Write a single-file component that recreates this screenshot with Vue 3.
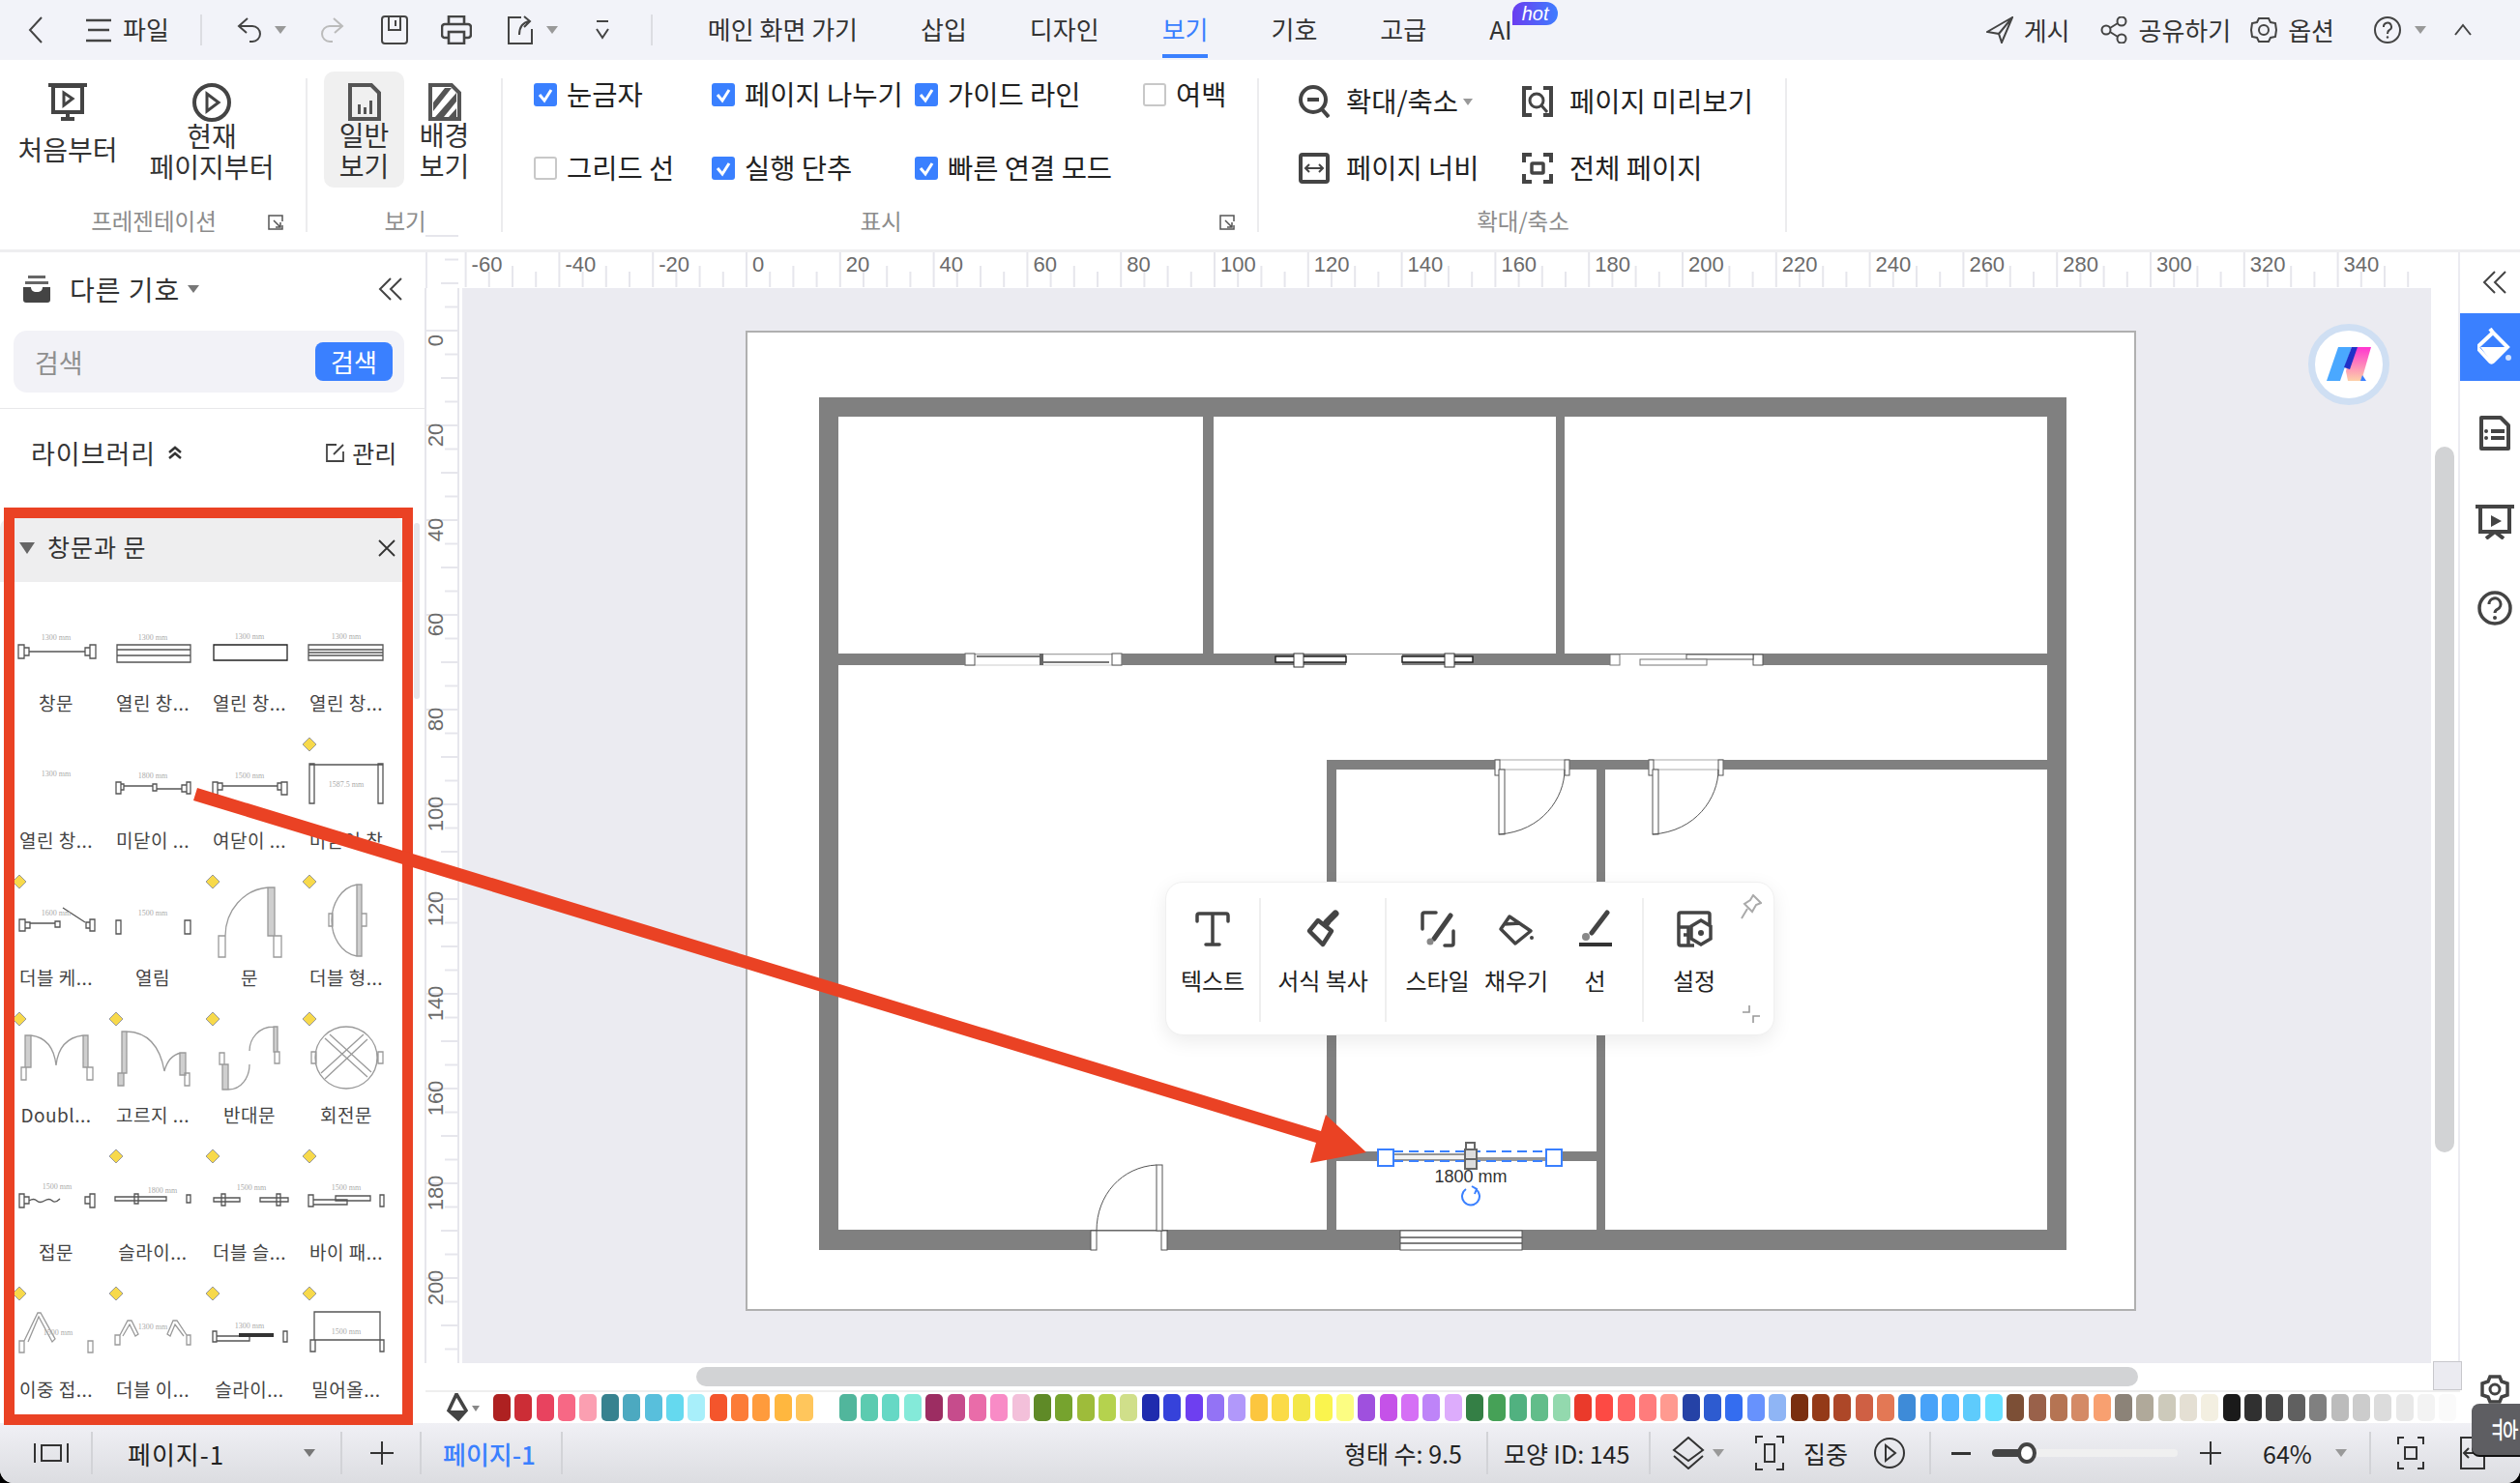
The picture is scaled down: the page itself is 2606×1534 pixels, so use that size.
<template>
  <div class="app">
    <header class="topbar">
      <button class="tb back"><svg width="20" height="30" viewBox="0 0 20 30"><path d="M15 2 3 15l12 13" class="ln"/></svg></button>
      <button class="tb file">
        <svg width="26" height="26" viewBox="0 0 26 26"><path d="M0 3h26M2 13h22M0 24h26" class="ln2"/></svg>
        <span>파일</span>
      </button>
      <i class="vsep first"></i>
      <button class="tb undo"><svg width="28" height="26" viewBox="0 0 28 26"><path d="M11 1 2 9l8 7M2 9h14a8 8 0 0 1 0 16h-3" class="ln"/></svg><b class="caret"></b></button>
      <button class="tb redo"><svg width="24" height="26" viewBox="0 0 24 26"><path d="M13 1l9 8-8 7M22 9H9a8 8 0 0 0 0 16h3" class="ln light"/></svg></button>
      <button class="tb save"><svg width="28" height="30" viewBox="0 0 28 30"><rect x="1" y="1" width="26" height="28" rx="3" class="ln"/><path d="M8 1v14h12V1M15 5v6" class="ln"/></svg></button>
      <button class="tb print"><svg width="32" height="30" viewBox="0 0 32 30"><path d="M8 9V1h16v8M8 23H4a3 3 0 0 1-3-3v-8a3 3 0 0 1 3-3h24a3 3 0 0 1 3 3v8a3 3 0 0 1-3 3h-4" class="ln2"/><rect x="8" y="17" width="16" height="12" class="ln2"/></svg></button>
      <button class="tb share"><svg width="28" height="30" viewBox="0 0 28 30"><path d="M15 2H2v27h24V14M13 20c0-9 4-13 11-14M18 1l6 5-6 6" class="ln"/></svg><b class="caret"></b></button>
      <button class="tb more"><svg width="16" height="22" viewBox="0 0 16 22"><path d="M2 2h12M2 10l6 9 6-9" class="ln"/></svg></button>
      <i class="vsep second"></i>
      <nav class="tabs">
        <span v-for="t in tabs" :key="t" class="tab" :class="{ on: t === '보기' }">{{ t }}</span>
        <span class="tab ai">AI<em class="hot">hot</em></span>
      </nav>
      <div class="top-right">
        <span class="tr publish"><svg width="28" height="28" viewBox="0 0 28 28"><path d="M27 1 1 16l12 2 3 9zM13 18 27 1" class="ln"/></svg>게시</span>
        <span class="tr sharing"><svg width="28" height="28" viewBox="0 0 28 28"><circle cx="6" cy="14" r="4.5" class="ln"/><circle cx="22" cy="5" r="4.5" class="ln"/><circle cx="22" cy="23" r="4.5" class="ln"/><path d="M10 12l8-5M10 16l8 5" class="ln"/></svg>공유하기</span>
        <span class="tr options"><svg width="28" height="28" viewBox="0 0 28 28"><path d="M9 2h10l2 4 5 1 1 7-1 7-5 1-2 4H9l-2-4-5-1-1-7 1-7 5-1z" class="ln"/><circle cx="14" cy="14" r="5" class="ln"/></svg>옵션</span>
        <span class="tr help"><svg width="28" height="28" viewBox="0 0 28 28"><circle cx="14" cy="14" r="13" class="ln"/><path d="M10 11a4 4 0 1 1 6 3c-2 1-2 2-2 4" class="ln"/><circle cx="14" cy="21.500" r="1.200" fill="#444"/></svg><b class="caret"></b></span>
        <svg class="fold" width="20" height="14" viewBox="0 0 20 14"><path d="M2 12l8-10 8 10" class="ln"/></svg>
      </div>
    </header>

    <section class="ribbon">
      <div class="rgroup g1">
        <div class="rbody">
          <button class="big first-btn">
            <svg width="40" height="39" viewBox="0 0 40 39"><path d="M0 2h40" stroke="#444" stroke-width="4"/><rect x="5" y="3" width="30" height="27" fill="none" stroke="#444" stroke-width="4"/><path d="M16 10l9 6-9 7z" fill="none" stroke="#444" stroke-width="3"/><path d="M20 30v6M13 37h14" stroke="#444" stroke-width="4"/></svg>
            <span class="single">처음부터</span>
          </button>
          <button class="big cur-btn">
            <svg width="40" height="40" viewBox="0 0 40 40"><circle cx="20" cy="20" r="18" fill="none" stroke="#444" stroke-width="4"/><path d="M15 11l12 9-12 9z" fill="none" stroke="#444" stroke-width="3"/></svg>
            <span>현재<br />페이지부터</span>
          </button>
        </div>
        <div class="rlabel">프레젠테이션</div>
        <svg class="launch" width="16" height="16" viewBox="0 0 16 16"><path d="M5 1H1v14h14v-4M1 1h14v6M6 6l7 7M13 8v5H8" fill="none" stroke="#555" stroke-width="1.500"/></svg>
      </div>

      <div class="rgroup g2">
        <div class="rbody">
          <button class="big view active">
            <svg width="34" height="39" viewBox="0 0 34 39"><path d="M2 2h22l8 8v27H2z" fill="none" stroke="#555" stroke-width="4"/><path d="M10 22h3v10h-3zM16 25h3v7h-3zM22 18h3v14h-3z" fill="#555"/></svg>
            <span>일반<br />보기</span>
          </button>
          <button class="big view">
            <svg width="34" height="39" viewBox="0 0 34 39"><path d="M2 2h22l8 8v27H2z" fill="none" stroke="#555" stroke-width="4"/><path d="M5 20 17 5h7L5 29zM7 35 29 10v9L16 35zM21 35l8-9v9z" fill="#555"/></svg>
            <span>배경<br />보기</span>
          </button>
        </div>
        <div class="rlabel">보기</div>
      </div>

      <div class="rgroup g3">
        <div class="rbody checks">
          <label v-for="c in checks" :key="c.t" class="chk">
            <svg v-if="c.on" width="24" height="24" viewBox="0 0 24 24"><rect width="24" height="24" rx="3" fill="#3a80ff"/><path d="M6 12l5 6 7-11" fill="none" stroke="#fff" stroke-width="3"/></svg>
            <svg v-else width="24" height="24" viewBox="0 0 24 24"><rect x="1" y="1" width="22" height="22" rx="2" fill="#fff" stroke="#c8c8c8" stroke-width="2"/></svg>
            <span>{{ c.t }}</span>
          </label>
        </div>
        <div class="rlabel">표시</div>
        <svg class="launch" width="16" height="16" viewBox="0 0 16 16"><path d="M5 1H1v14h14v-4M1 1h14v6M6 6l7 7M13 8v5H8" fill="none" stroke="#555" stroke-width="1.500"/></svg>
      </div>

      <div class="rgroup g4">
        <div class="rbody zooms">
          <span class="zm">
            <svg width="32" height="34" viewBox="0 0 32 34"><circle cx="15" cy="15" r="13" fill="none" stroke="#444" stroke-width="4"/><path d="M24 25l7 8" stroke="#444" stroke-width="4"/><path d="M9 15h12" stroke="#444" stroke-width="4"/></svg>
            <span>확대/축소</span><b class="caret tiny"></b>
          </span>
          <span class="zm">
            <svg width="32" height="32" viewBox="0 0 32 32"><path d="M10 2H2v28h8M22 2h8v28h-8" fill="none" stroke="#444" stroke-width="4"/><circle cx="15" cy="15" r="7" fill="none" stroke="#444" stroke-width="3"/><path d="M20 20l6 7" stroke="#444" stroke-width="3"/></svg>
            <span>페이지 미리보기</span>
          </span>
          <span class="zm">
            <svg width="32" height="32" viewBox="0 0 32 32"><rect x="2" y="2" width="28" height="28" rx="2" fill="none" stroke="#444" stroke-width="4"/><path d="M7 16h18M11 12l-4 4 4 4M21 12l4 4-4 4" fill="none" stroke="#444" stroke-width="2"/></svg>
            <span>페이지 너비</span>
          </span>
          <span class="zm">
            <svg width="32" height="32" viewBox="0 0 32 32"><path d="M10 2H2v8M22 2h8v8M10 30H2v-8M22 30h8v-8" fill="none" stroke="#444" stroke-width="4"/><rect x="10" y="11" width="12" height="10" rx="1" fill="none" stroke="#444" stroke-width="3.500"/></svg>
            <span>전체 페이지</span>
          </span>
        </div>
        <div class="rlabel">확대/축소</div>
      </div>
    </section>

    <main class="work">
      <aside class="left">
        <div class="lhead">
          <svg width="28" height="28" viewBox="0 0 28 28"><path d="M5 0h18v3H5zM2 6h24v3H2z" fill="#666"/><path d="M0 12h8c0 3 2 5 6 5s6-2 6-5h8v13a3 3 0 0 1-3 3H3a3 3 0 0 1-3-3z" fill="#444"/></svg>
          <span class="ltitle">다른 기호</span><b class="caret tri"></b>
          <svg class="collapse" width="26" height="24" viewBox="0 0 26 24"><path d="M13 1 2 12l11 11M24 1 13 12l11 11" class="ln"/></svg>
        </div>
        <div class="search">
          <span class="ph">검색</span>
          <button class="go">검색</button>
        </div>
        <div class="libhead">
          <span class="libtitle">라이브러리</span>
          <svg width="16" height="16" viewBox="0 0 16 16"><path d="M2 8l6-5 6 5M2 14l6-5 6 5" fill="none" stroke="#333" stroke-width="2.500"/></svg>
          <span class="manage">
            <svg width="20" height="20" viewBox="0 0 20 20"><path d="M11 2H1v17h17V9M8 12 18 2" fill="none" stroke="#444" stroke-width="1.800"/></svg>관리
          </span>
        </div>
        <section class="lib">
          <div class="libbar">
            <i class="down"></i>
            <span>창문과 문</span>
            <svg width="18" height="18" viewBox="0 0 18 18"><path d="M1 1l16 16M17 1 1 17" stroke="#333" stroke-width="1.800"/></svg>
          </div>
          <div class="shapes">
            <div v-for="s in shapes" :key="s.id" class="shape">
              <svg width="100" height="96" viewBox="0 0 100 96">
                <path v-if="s.star" d="M12 3l7 7-7 7-7-7z" fill="#f7d94b" stroke="#999" stroke-width="1"/>
                <path v-if="s.leaf" :d="s.leaf" fill="#cfcfcf"/>
                <path :d="s.d" :fill="s.fill || 'none'" :stroke="s.tone || '#555'" stroke-width="1.300"/>
                <path v-if="s.dark" :d="s.dark" fill="#333"/>
                <text v-if="s.note" :x="s.note[0]" :y="s.note[1]" text-anchor="middle" class="note">{{ s.note[2] }}</text>
              </svg>
              <span class="shape-name">{{ s.label }}</span>
            </div>
          </div>
        </section>
        <i class="lib-thumb"></i>
      </aside>

      <div class="center">
        <div class="view-area">
          <div class="scroller">
            <div class="rulers">
              <div class="corner"></div>
              <svg class="hruler" width="2036" height="37" viewBox="478 0 2036 37">
                <g v-for="m in hMajors" :key="m.v">
                  <path :d="'M' + m.x + ' 0V36'" class="tick"/>
                  <path v-for="k in 3" :key="k" :d="'M' + (m.x + k * 24.2) + (k === 2 ? ' 14V36' : ' 20V36')" class="tick"/>
                  <text :x="m.x + 6" y="14" class="rnum" dominant-baseline="middle">{{ m.v }}</text>
                </g>
              </svg>
            </div>
            <div class="canvas-row">
              <svg class="vruler" width="38" height="1112" viewBox="0 298 38 1112">
                <path d="M0 298V1410" class="tick"/>
                <g v-for="m in vMajors" :key="m.v">
                  <path :d="'M0 ' + m.y + 'H34'" class="tick"/>
                  <path v-for="k in 3" :key="k" :d="'M' + (k === 2 ? 16 : 20) + ' ' + (m.y + k * 24.5) + 'H34'" class="tick"/>
                  <text :transform="'translate(12 ' + (m.y + 10) + ') rotate(-90)'" class="rnum" text-anchor="middle" dominant-baseline="middle">{{ m.v }}</text>
                </g>
                <path d="M34 298V1410" class="tick"/>
              </svg>
              <div class="canvas">
                <svg class="plan" width="2036" height="1112" viewBox="478 298 2036 1112">
                  <rect x="772" y="343" width="1436" height="1012" fill="#fff" stroke="#b0b0b0" stroke-width="2"/>
                  <!-- walls -->
                  <path d="M847 411H2137V1293H847zM867 431V1272H2117V431z" fill="#808080" fill-rule="evenodd"/>
                  <path d="M867 676H2117V688H867zM1244 431h11v245h-11zM1609 431h9v245h-9zM1372 786H2117V796H1382V1272h-10zM1651 796h9V1272h-9zM1382 1191H1651V1201H1382z" fill="#808080"/>
                  <!-- window, sliding -->
                  <rect x="998" y="677" width="162" height="11" fill="#fff" stroke="#ccc"/>
                  <rect x="998" y="676" width="10" height="12" fill="#fff" stroke="#555"/>
                  <rect x="1150" y="676" width="10" height="12" fill="#fff" stroke="#555"/>
                  <path d="M1010 679H1077M1079 685H1147" stroke="#777" stroke-width="2"/>
                  <rect x="1075" y="676" width="4" height="12" fill="#666"/>
                  <!-- double slider -->
                  <rect x="1392" y="677" width="58" height="11" fill="#fff"/>
                  <rect x="1319" y="679" width="73" height="6" fill="#fff" stroke="#222" stroke-width="1.500"/>
                  <rect x="1450" y="679" width="73" height="6" fill="#fff" stroke="#222" stroke-width="1.500"/>
                  <rect x="1338" y="676" width="10" height="14" fill="#fff" stroke="#333"/>
                  <rect x="1494" y="676" width="10" height="14" fill="#fff" stroke="#333"/>
                  <!-- bypass window -->
                  <rect x="1670" y="677" width="150" height="11" fill="#fff"/>
                  <rect x="1665" y="677" width="10" height="11" fill="#fff" stroke="#777"/>
                  <rect x="1813" y="677" width="10" height="11" fill="#fff" stroke="#555"/>
                  <rect x="1744" y="677" width="69" height="5" fill="#fff" stroke="#555"/>
                  <rect x="1696" y="682" width="69" height="6" fill="#fff" stroke="#777"/>
                  <!-- doors -->
                  <g fill="none" stroke="#555" stroke-width="1">
                    <rect x="1546" y="786" width="77" height="10" fill="#fff" stroke="#aaa"/>
                    <rect x="1546" y="786" width="5" height="16" fill="#fff"/>
                    <rect x="1618" y="786" width="5" height="16" fill="#fff"/>
                    <rect x="1550" y="796" width="6" height="67" fill="#fff"/>
                    <path d="M1550 863C1595 860 1618 825 1618 796"/>
                    <rect x="1705" y="786" width="77" height="10" fill="#fff" stroke="#aaa"/>
                    <rect x="1705" y="786" width="5" height="16" fill="#fff"/>
                    <rect x="1777" y="786" width="5" height="16" fill="#fff"/>
                    <rect x="1709" y="796" width="6" height="67" fill="#fff"/>
                    <path d="M1709 863C1754 860 1777 825 1777 796"/>
                    <rect x="1128" y="1273" width="79" height="20" fill="#fff" stroke="none"/>
                    <path d="M1128 1273H1208"/>
                    <rect x="1128" y="1273" width="6" height="20" fill="#fff"/>
                    <rect x="1201" y="1273" width="6" height="20" fill="#fff"/>
                    <rect x="1196" y="1205" width="6" height="68" fill="#fff"/>
                    <path d="M1134 1273C1134 1236 1160 1207 1196 1205"/>
                  </g>
                  <!-- bottom window -->
                  <rect x="1448" y="1273" width="126" height="20" fill="#fff" stroke="#555"/>
                  <path d="M1448 1280H1574M1448 1286H1574" stroke="#555" stroke-width="1.500"/>
                  <!-- selected window -->
                  <rect x="1441" y="1191" width="158" height="10" fill="#fff"/>
                  <rect x="1441" y="1194" width="74" height="6" fill="#f2f2f2" stroke="#333"/>
                  <path d="M1527 1198H1599M1527 1200H1599" stroke="#333"/>
                  <path d="M1441 1191H1599M1441 1201H1599" stroke="#3a80ff" stroke-width="2" stroke-dasharray="10 6"/>
                  <rect x="1516" y="1182" width="9" height="8" fill="#fff" stroke="#666" stroke-width="2"/>
                  <rect x="1515" y="1189" width="12" height="20" fill="#ddd" stroke="#666" stroke-width="2"/>
                  <path d="M1515 1199H1527" stroke="#666" stroke-width="2"/>
                  <rect x="1425" y="1189" width="16" height="17" fill="#fff" stroke="#3a80ff" stroke-width="2"/>
                  <rect x="1599" y="1189" width="16" height="17" fill="#fff" stroke="#3a80ff" stroke-width="2"/>
                  <text x="1521" y="1223" text-anchor="middle" class="dim">1800 mm</text>
                  <path d="M1527 1228A9 9 0 1 1 1517 1228M1523 1225l5 3-2 5" transform="translate(-1 2)" fill="none" stroke="#3a80ff" stroke-width="2"/>
                </svg>
                <div class="ai-bubble">
                  <svg width="46" height="38" viewBox="0 0 46 38">
                    <defs>
                      <linearGradient id="mk" x1="0" y1="0" x2="0" y2="1"><stop offset="0" stop-color="#ff34d0"/><stop offset="1" stop-color="#fdd0a8"/></linearGradient>
                    </defs>
                    <path d="M12 1h14L14 36H0z" fill="#4aa8ff"/>
                    <path d="M26 1h20L36 36H22l-2-10z" fill="url(#mk)"/>
                    <path d="M26 1h6L24 24l-6-2z" fill="#2030c8"/>
                    <path d="M37 30l4 6h-6z" fill="#3a80ff"/>
                  </svg>
                </div>
                <div class="float">
                  <div v-for="f in floats" :key="f.t" class="fitem" :class="f.c">
                    <svg width="40" height="40" viewBox="0 0 40 40" v-html="f.svg"></svg>
                    <span>{{ f.t }}</span>
                  </div>
                  <svg class="pin" width="22" height="26" viewBox="0 0 22 26"><path d="M13 1l8 8-5 2-4 7-8-8 6-4zM7 15l-6 10" fill="none" stroke="#aaa" stroke-width="2"/></svg>
                  <svg class="shrink" width="20" height="20" viewBox="0 0 20 20"><path d="M1 8h7V1M19 12h-7v7" fill="none" stroke="#999" stroke-width="1.600"/></svg>
                </div>
              </div>
            </div>
          </div>
          <div class="vbar"><i></i></div>
        </div>
        <div class="hbar"><i></i><b></b></div>
        <div class="colors">
          <svg class="fillico" width="36" height="30" viewBox="0 0 36 30"><path d="M12 1 22 18l-8 9-10-9z" fill="none" stroke="#444" stroke-width="3.500"/><path d="M4 18h18l-8 9z" fill="#444"/><path d="M28 13h8l-4 6z" fill="#888"/></svg>
          <i v-for="(c, i) in swatches" :key="i" class="sw" :style="{ background: c }"></i>
        </div>
      </div>

      <aside class="right">
        <svg class="r-fold" width="26" height="24" viewBox="0 0 26 24"><path d="M13 1 2 12l11 11M24 1 13 12l11 11" class="ln"/></svg>
        <div class="r-on">
          <svg width="36" height="40" viewBox="0 0 36 40"><path d="M13 1l3 4L31 20 16 35a2 2 0 0 1-3 0L1 22a2 2 0 0 1 0-3L16 5" fill="none" stroke="#fff" stroke-width="4"/><path d="M3 20h27L15 36z" fill="#fff"/><circle cx="32" cy="31" r="3" fill="#cfe0ff"/></svg>
        </div>
        <svg class="r-ico" width="32" height="36" viewBox="0 0 32 36"><path d="M2 2h20l8 8v24H2z" fill="none" stroke="#444" stroke-width="4" stroke-linejoin="round"/><path d="M12 16h14M12 23h14" stroke="#444" stroke-width="4"/><circle cx="7" cy="16" r="2" fill="#444"/><circle cx="7" cy="23" r="2" fill="#444"/></svg>
        <svg class="r-ico" width="40" height="36" viewBox="0 0 40 36"><path d="M0 2h40" stroke="#444" stroke-width="4"/><path d="M5 2v26h30V2" fill="none" stroke="#444" stroke-width="4"/><path d="M16 11l11 6-11 6z" fill="#444"/><path d="M20 28l-9 7M20 28l9 7" stroke="#444" stroke-width="4"/></svg>
        <svg class="r-ico" width="36" height="36" viewBox="0 0 36 36"><circle cx="18" cy="18" r="16" fill="none" stroke="#444" stroke-width="3.500"/><path d="M12 14a6 6 0 1 1 9 5c-2 1-3 2-3 4" fill="none" stroke="#444" stroke-width="3"/><circle cx="18" cy="28" r="2" fill="#444"/></svg>
        <svg class="r-gear" width="32" height="32" viewBox="0 0 32 32"><path d="M11 2h10l2 5 6 2v12l-6 2-2 5H11l-2-5-6-2V9l6-2z" fill="#fff" stroke="#444" stroke-width="3.500"/><circle cx="16" cy="15" r="5" fill="none" stroke="#444" stroke-width="3"/></svg>
      </aside>
    </main>

    <footer class="status">
      <svg class="st-panel" width="36" height="20" viewBox="0 0 36 20"><path d="M1 0v20M35 0v20" stroke="#333" stroke-width="2"/><rect x="8" y="2" width="20" height="16" fill="none" stroke="#333" stroke-width="2"/></svg>
      <i class="st-sep s1"></i>
      <span class="page-name">페이지-1</span>
      <b class="caret st-c1"></b>
      <i class="st-sep"></i>
      <svg class="st-plus" width="24" height="24" viewBox="0 0 24 24"><path d="M0 12h24M12 0v24" stroke="#333" stroke-width="2"/></svg>
      <i class="st-sep"></i>
      <span class="page-tab">페이지-1</span>
      <i class="st-sep s4"></i>
      <span class="st-a">형태 수: 9.5</span>
      <i class="st-sep s5"></i>
      <span class="st-b">모양 ID: 145</span>
      <i class="st-sep s5b"></i>
      <svg class="st-layer" width="34" height="34" viewBox="0 0 34 34"><path d="M17 1 32 14 17 25 2 14zM2 20l15 13 15-13" fill="none" stroke="#333" stroke-width="2"/></svg>
      <b class="caret st-c2"></b>
      <svg class="st-focus" width="30" height="36" viewBox="0 0 30 36"><path d="M8 1H1v7M22 1h7v7M8 35H1v-7M22 35h7v-7" fill="none" stroke="#333" stroke-width="2"/><rect x="10" y="9" width="10" height="18" fill="none" stroke="#333" stroke-width="2"/></svg>
      <span class="st-c">집중</span>
      <svg class="st-play" width="32" height="32" viewBox="0 0 32 32"><circle cx="16" cy="16" r="15" fill="none" stroke="#333" stroke-width="2"/><path d="M12 8l10 8-10 8z" fill="none" stroke="#333" stroke-width="2"/></svg>
      <i class="st-sep s6"></i>
      <i class="st-minus"></i>
      <div class="slider"><i class="fill"></i><i class="knob"></i></div>
      <svg class="st-plus2" width="22" height="36" viewBox="0 0 22 36"><path d="M0 18h22M11 6v24" stroke="#333" stroke-width="2"/></svg>
      <span class="st-pct">64%</span>
      <b class="caret st-c3"></b>
      <i class="st-sep s7"></i>
      <svg class="st-fit" width="28" height="34" viewBox="0 0 28 34"><path d="M7 1H1v7M21 1h6v7M7 33H1v-7M21 33h6v-7" fill="none" stroke="#333" stroke-width="2"/><rect x="8" y="11" width="12" height="12" fill="none" stroke="#333" stroke-width="2"/></svg>
      <svg class="st-exit" width="26" height="34" viewBox="0 0 26 34"><path d="M1 1h24v32H1z" fill="none" stroke="#333" stroke-width="2"/><path d="M16 17H4M9 12l-5 5 5 5" fill="none" stroke="#333" stroke-width="2"/></svg>
    </footer>

    <div class="rest-tip"><span>휴</span></div>

    <!-- hand-drawn annotation over the screenshot -->
    <svg class="mark" width="2606" height="1534" viewBox="0 0 2606 1534">
      <rect x="9.500" y="530.500" width="412" height="938" fill="none" stroke="#ea4224" stroke-width="11"/>
      <path d="M204 815 1366 1170 1371 1153 1413 1192 1355 1203 1361 1182 200 828z" fill="#ea4224"/>
    </svg>
  </div>
</template>

<script setup>
const tabs = ['메인 화면 가기', '삽입', '디자인', '보기', '기호', '고급']

const checks = [
  { t: '눈금자', on: true },
  { t: '페이지 나누기', on: true },
  { t: '가이드 라인', on: true },
  { t: '여백', on: false },
  { t: '그리드 선', on: false },
  { t: '실행 단추', on: true },
  { t: '빠른 연결 모드', on: true },
]

// ruler ticks, in page coordinates
const hMajors = []
for (let v = -60; v <= 340; v += 20) hMajors.push({ v, x: 772 + (v / 20) * 96.8 })
const vMajors = []
for (let v = 0; v <= 200; v += 20) vMajors.push({ v, y: 342 + (v / 20) * 98 })
vMajors.unshift({ v: '', y: 244 })

const box = (x, y, w, h) => `M${x} ${y}h${w}v${h}h${-w}z`
const note = t => [50, 45, t]
const gray = '#9a9a9a'

const shapes = [
  { label: '창문', d: box(11, 49, 6, 14) + box(17, 52, 5, 8) + 'M22 56H80' + box(80, 52, 5, 8) + box(85, 49, 6, 14), note: [50, 44, '1300 mm'] },
  { label: '열린 창...', d: box(13, 49, 76, 18) + 'M13 54H89M13 60H89', note: [50, 44, '1300 mm'] },
  { label: '열린 창...', d: box(13, 49, 76, 16), tone: '#222', note: [50, 43, '1300 mm'] },
  { label: '열린 창...', d: box(11, 49, 77, 16) + 'M11 54H88M11 57H88M11 60H88', note: [50, 43, '1300 mm'] },

  { label: '열린 창...', d: '', note: [50, 43, '1300 mm'] },
  { label: '미닫이 ...', d: box(12, 49, 5, 12) + box(17, 51, 3, 6) + 'M20 53H50' + box(50, 51, 4, 7) + 'M54 56H80' + box(80, 52, 5, 7) + box(85, 49, 4, 12), note: [50, 45, '1800 mm'] },
  { label: '여닫이 ...', d: box(12, 49, 5, 13) + box(17, 50, 5, 7) + 'M22 53H79' + box(79, 50, 4, 7) + box(83, 49, 6, 13), note: [50, 45, '1500 mm'] },
  { label: '미닫이 창', star: true, d: box(12, 30, 5, 41) + box(83, 30, 5, 41) + 'M12 31H88', note: [50, 54, '1587.5 mm'] },

  { label: '더블 케...', star: true, d: box(12, 49, 6, 12) + box(18, 52, 5, 6) + 'M23 53H49' + box(49, 51, 5, 6) + 'M57 37 80 52' + box(81, 52, 4, 6) + box(85, 49, 5, 12), note: [50, 45, '1600 mm'] },
  { label: '열림', d: box(12, 50, 5, 14) + box(83, 50, 6, 14), note: [50, 45, '1500 mm'] },
  { label: '문', star: true, tone: gray, leaf: box(69, 16, 7, 50), d: box(69, 16, 7, 50) + 'M69 16C44 18 25 40 25 66' + box(18, 66, 7, 22) + box(75, 66, 8, 22) },
  { label: '더블 형...', star: true, tone: gray, leaf: box(61, 13, 5, 74), d: box(61, 13, 5, 74) + 'M61 13C44 16 35 34 35 50S44 84 61 87' + box(66, 43, 5, 13) + box(32, 43, 4, 13) },

  { label: 'Doubl...', star: true, tone: gray, leaf: box(18, 27, 6, 33) + box(78, 27, 5, 33), d: box(18, 27, 6, 33) + box(78, 27, 5, 33) + 'M24 27Q47 30 50 58Q53 30 78 27' + box(14, 60, 5, 13) + box(82, 60, 6, 13) },
  { label: '고르지 ...', star: true, tone: gray, leaf: box(18, 23, 5, 43) + box(78, 45, 6, 23) + box(14, 66, 6, 13), d: box(18, 23, 5, 43) + box(14, 66, 6, 13) + 'M23 23Q55 24 62 64Q66 48 79 45' + box(78, 45, 6, 23) + box(83, 66, 5, 13) },
  { label: '반대문', star: true, tone: gray, leaf: box(75, 18, 4, 26) + box(22, 57, 6, 26), d: box(75, 18, 4, 26) + box(76, 44, 5, 12) + 'M75 18C60 18 50 30 50 43M28 83C42 83 50 70 50 57' + box(22, 57, 6, 26) + box(19, 45, 5, 12) },
  { label: '회전문', star: true, tone: gray, d: 'M18 50A32 32 0 0 1 82 50A32 32 0 0 1 18 50' + box(14, 44, 5, 12) + box(83, 44, 5, 12) + 'M28 30 72 70M33 26 76 65M24 66 68 26M28 72 72 31' },

  { label: '접문', d: box(12, 49, 5, 14) + box(17, 52, 5, 7) + 'M22 56q5 -3 8 0t8 0t8 0t8 -2' + box(80, 52, 5, 7) + box(85, 49, 5, 14), note: [51, 44, '1500 mm'] },
  { label: '슬라이...', star: true, d: box(11, 52, 53, 4) + box(31, 49, 4, 10) + box(85, 50, 4, 8), note: [60, 48, '1800 mm'] },
  { label: '더블 슬...', star: true, d: box(13, 53, 27, 4) + box(21, 49, 4, 12) + box(61, 53, 29, 4) + box(78, 49, 4, 12), note: [52, 45, '1500 mm'] },
  { label: '바이 패...', star: true, d: box(11, 50, 5, 12) + box(16, 55, 35, 5) + box(39, 51, 36, 5) + box(85, 50, 4, 12), note: note('1500 mm') },

  { label: '이중 접...', star: true, tone: gray, d: box(12, 59, 5, 12) + box(83, 59, 5, 12) + 'M17 59 31 30 34 30 49 57 46 60 32 34 21 60', note: [52, 53, '1500 mm'] },
  { label: '더블 이...', star: true, tone: gray, d: box(11, 53, 5, 10) + box(85, 53, 4, 10) + 'M16 53 24 38 28 38 35 52 32 54 26 42 19 54M85 53 75 38 71 38 65 52 68 54 73 42 82 54', note: [50, 47, '1300 mm'] },
  { label: '슬라이...', star: true, d: box(12, 49, 4, 11) + box(16, 54, 34, 5) + box(85, 49, 4, 11), dark: 'M39 51h36v4H39z', note: [50, 46, '1300 mm'] },
  { label: '밀어올...', star: true, d: box(17, 29, 68, 29) + box(13, 58, 5, 12) + box(85, 58, 4, 12), note: [50, 52, '1500 mm'] },
].map((s, id) => ({ ...s, id }))

const ic = 'fill="none" stroke="#444" stroke-width="3.5"'
const floats = [
  { t: '텍스트', c: 'f-text', svg: `<path d="M4 12V6q0-2 2-2h28q2 0 2 2v6M20 4v32M13 36h14" ${ic} stroke-linecap="round"/>` },
  { t: '서식 복사', c: 'f-copy', svg: `<path d="M15 11 29 22 20 36 6 22z" fill="none" stroke="#444" stroke-width="4.5" stroke-linejoin="round"/><path d="M15 11 28 14 24 20z" fill="#444"/><path d="M24 13 33 4" stroke="#444" stroke-width="7" stroke-linecap="round"/>` },
  { t: '스타일', c: 'f-style', svg: `<path d="M18 3H6q-2 0-2 2v15M36 22v13q0 2-2 2h-7" ${ic} stroke-linecap="round"/><path d="M33 6 16 30" stroke="#444" stroke-width="5" stroke-linecap="round"/><circle cx="12" cy="33" r="3.500" fill="#888"/>` },
  { t: '채우기', c: 'f-fill', svg: `<path d="M13 7 35 22 19 35 4 20zM7 15 24 14" fill="none" stroke="#444" stroke-width="3.5" stroke-linejoin="round"/><circle cx="36" cy="29" r="2" fill="#444"/>` },
  { t: '선', c: 'f-line', svg: `<path d="M32 3 16 24" stroke="#444" stroke-width="5" stroke-linecap="round"/><circle cx="10" cy="28" r="4" fill="#888"/><path d="M3 36H37" stroke="#333" stroke-width="4"/>` },
  { t: '설정', c: 'f-set', svg: `<path d="M36 15V5q0-2-2-2H6q-2 0-2 2v30q0 2 2 2h14" ${ic}/><path d="M4 18H14V36M14 26H9" ${ic}/><path d="M27 11 37 17V30L27 36 17 30V17z" ${ic}/><circle cx="27" cy="24" r="3" fill="#444"/>` },
]

const swatches = [
  '#ae2121', '#cc2d36', '#e8435f', '#f76885', '#fb9fb1',
  '#37828f', '#4ca9c0', '#58bfdc', '#65d9ef', '#a8effa',
  '#f4552c', '#fc7c38', '#ff9b3c', '#ffb73f', '#ffc65c', '#ffffff',
  '#51b69c', '#5ccbb0', '#66d8c5', '#84ead9',
  '#9c2d62', '#c64c8c', '#e96ca9', '#f88bc6', '#f3c0da',
  '#5f8a27', '#76a32e', '#9ebc3a', '#b5d24e', '#d0df8a',
  '#1f2bae', '#3642da', '#6e3ff0', '#9373f5', '#b198fa',
  '#fcc63f', '#fbdb47', '#f3e748', '#faf44e', '#fcfd82',
  '#9f50de', '#c552e8', '#d56ff5', '#be84f8', '#ddacfc',
  '#347f45', '#46a157', '#51b180', '#62bd8a', '#93d9ae',
  '#ea3a2b', '#fd4a44', '#ff6464', '#ff7c7c', '#ff9a90',
  '#2542a6', '#2d5bd0', '#346df0', '#6792fd', '#8fb5f5',
  '#7a2f10', '#943a18', '#ad4728', '#cf6044', '#e37855',
  '#3e8bd8', '#48a2f8', '#54b6ff', '#5ecbfc', '#69e0ff',
  '#7c4f36', '#99614a', '#b57453', '#d48a66', '#f8a070',
  '#8c8378', '#b0a99a', '#cdcabb', '#e4dfd3', '#f3efe1',
  '#1a1a1a', '#303030', '#484848', '#606060', '#808080', '#bcbcbc', '#cccccc', '#dcdcdc', '#e8e8e8', '#f3f3f3', '#fafafa',
]
</script>

<style>
html, body { margin: 0; background: #000; }
</style>

<style scoped>
.app {
  position: relative;
  width: 2606px;
  height: 1534px;
  overflow: hidden;
  display: flex;
  flex-direction: column;
  background: #fff;
  border-radius: 0 0 14px 14px;
  color: #333;
  font-family: "Noto Sans CJK KR", "Noto Sans", sans-serif;
  font-size: 26px;
}
button {
  border: 0;
  background: none;
  padding: 0;
  font: inherit;
  color: inherit;
}
svg { display: block; flex: none; }
.ln { fill: none; stroke: #444; stroke-width: 2; }
.ln2 { fill: none; stroke: #444; stroke-width: 2.6; }
.light { stroke: #bbb; }

.caret {
  display: block;
  width: 0;
  height: 0;
  border: 6px solid transparent;
  border-top: 8px solid #999;
  border-bottom: 0;
  flex: none;
}

/* top bar */
.topbar {
  flex: none;
  height: 62px;
  display: flex;
  align-items: center;
  background: #f2f3f9;
  font-size: 26px;
  padding-right: 49px;
  box-sizing: border-box;
}
.tb { display: flex; align-items: center; flex: none; }
.back { margin-left: 28px; }
.file { margin-left: 41px; gap: 12px; }
.file span { margin-top: -3px; }
.vsep { display: block; width: 2px; height: 32px; background: #dcdde2; flex: none; }
.vsep.first { margin-left: 32px; }
.undo { margin-left: 36px; gap: 11px; }
.redo { margin-left: 36px; }
.save { margin-left: 38px; }
.print { margin-left: 34px; }
.share { margin-left: 36px; gap: 13px; }
.more { margin-left: 38px; }
.vsep.second { margin-left: 42px; }
.tabs { display: flex; gap: 65px; margin-left: 57px; height: 100%; }
.tab {
  position: relative;
  display: flex;
  align-items: center;
  padding-bottom: 3px;
  box-sizing: border-box;
  white-space: nowrap;
}
.tab.on { color: #3a80ff; }
.tab.on::after {
  content: "";
  position: absolute;
  left: 0;
  right: 0;
  bottom: 2px;
  height: 4px;
  background: #3a80ff;
}
.hot {
  position: absolute;
  left: 24px;
  top: 2px;
  width: 47px;
  height: 24px;
  text-align: center;
  color: #fff;
  font: italic 20px/24px "Liberation Sans", sans-serif;
  background: linear-gradient(90deg, #6a3df0, #3f7dff);
  border-radius: 12px 12px 12px 0;
}
.top-right { display: flex; align-items: center; margin-left: auto; line-height: 34px; }
.tr { display: flex; align-items: center; gap: 11px; white-space: nowrap; }
.publish { margin-right: 32px; }
.sharing { margin-right: 20px; }
.options { margin-right: 41px; }
.help { gap: 14px; }
.fold { margin-left: 28px; }

/* ribbon */
.ribbon {
  flex: none;
  height: 196px;
  display: flex;
  border-bottom: 3px solid #eeeef0;
  background: #fff;
}
.rgroup { position: relative; flex: none; display: flex; flex-direction: column; height: 196px; }
.rgroup::after {
  content: "";
  position: absolute;
  right: 0;
  top: 19px;
  bottom: 18px;
  width: 2px;
  background: #ececee;
}
.g1 { width: 318px; }
.g2 { width: 202px; }
.g3 { width: 782px; }
.g4 { width: 546px; }
.rbody { height: 151px; display: flex; box-sizing: border-box; }
.rlabel { text-align: center; font-size: 23.500px; line-height: 30px; color: #8c8c8c; }
.launch { position: absolute; top: 160px; right: 25px; }

.big {
  display: flex;
  flex-direction: column;
  align-items: center;
  padding-top: 24px;
  font-size: 28px;
  line-height: 32px;
  white-space: nowrap;
}
.big span { margin-top: -2px; }
.big.first-btn { width: 122px; margin-left: 9px; }
.cur-btn { width: 150px; margin-left: 13px; }
.big .single { margin-top: 13px; }
.g2 .rbody { padding-left: 17px; }
.view { width: 83px; padding-top: 12px; height: 120px; margin-top: 12px; border-radius: 10px; }
.view.active { background: #f0f0f0; }

.checks {
  display: grid;
  grid-template-columns: 184px 210px 236px auto;
  grid-template-rows: 24px 24px;
  row-gap: 52px;
  padding: 24px 0 0 32px;
  align-content: start;
  font-size: 28.500px;
}
.chk { display: flex; align-items: center; gap: 10px; white-space: nowrap; color: #222; }
.chk span { margin-top: -3px; }

.zooms {
  display: grid;
  grid-template-columns: 231px auto;
  grid-template-rows: 36px 36px;
  row-gap: 33px;
  padding: 25px 0 0 41px;
  align-content: start;
  font-size: 28.500px;
}
.zm { display: flex; align-items: center; gap: 17px; white-space: nowrap; color: #222; }
.zm span { margin-top: -3px; }
.caret.tiny { margin-left: -12px; border-width: 5px; border-top-width: 7px; border-bottom-width: 0; }

/* main row */
.work { flex: 1; min-height: 0; display: flex; }
.left { position: relative; flex: none; width: 440px; display: flex; flex-direction: column; overflow: hidden; }
.lhead { height: 76px; flex: none; display: flex; align-items: center; padding-left: 24px; }
.ltitle { margin-left: 20px; font-size: 28px; letter-spacing: 1px; white-space: nowrap; }
.tri { margin-left: 8px; border-top-color: #777; }
.collapse { margin-left: 185px; }
.search {
  height: 64px;
  flex: none;
  margin: 5px 22px 0 14px;
  background: #f2f2f7;
  border-radius: 14px;
  display: flex;
  align-items: center;
  justify-content: space-between;
  padding: 0 12px 0 22px;
}
.ph { color: #8f8f8f; font-size: 27px; }
.go { width: 80px; height: 40px; border-radius: 8px; background: #3a80ff; color: #fff; font-size: 26px; line-height: 40px; }
.libhead {
  height: 90px;
  flex: none;
  margin: 16px 0 0;
  border-top: 1px solid #e8e8ea;
  display: flex;
  align-items: center;
  padding-left: 32px;
}
.libtitle { font-size: 27px; letter-spacing: 1px; margin-right: 12px; }
.manage { display: flex; align-items: center; gap: 7px; margin-left: 148px; font-size: 25px; }
.lib { margin-top: 23px; width: 420px; }
.libbar {
  height: 66px;
  box-sizing: border-box;
  padding: 0 0 5px 20px;
  display: flex;
  align-items: center;
  background: #eeeeef;
  border-radius: 10px 10px 0 0;
  font-size: 25px;
}
.libbar span { margin: -4px 0 0 13px; letter-spacing: 1px; flex: 1; }
.libbar svg { margin-right: 11px; }
.down { display: block; width: 0; height: 0; border: 8px solid transparent; border-top: 12px solid #666; border-bottom: 0; }
.shapes {
  display: grid;
  grid-template-columns: repeat(4, 100px);
  grid-auto-rows: 142px;
  padding: 16px 0 0 8px;
}
.shape { display: flex; flex-direction: column; align-items: center; }
.shape-name {
  font-size: 19px;
  line-height: 26px;
  color: #444;
  white-space: nowrap;
  letter-spacing: 0.5px;
}
.note { font: 8px "Liberation Serif", serif; fill: #aaa; }
.lib-thumb { position: absolute; left: 428px; top: 280px; width: 6px; height: 182px; background: #e6e6ea; border-radius: 3px; }

.center { flex: 1; min-width: 0; display: flex; flex-direction: column; }
.view-area { height: 1149px; display: flex; flex: none; }
.scroller { width: 2074px; display: flex; flex-direction: column; flex: none; }
.rulers { display: flex; height: 37px; flex: none; }
.corner { width: 38px; flex: none; border-left: 2px solid #e8e8ee; box-sizing: border-box; }
.hruler { background: #fff; overflow: visible; }
.tick { stroke: #e6e6ec; stroke-width: 2; fill: none; }
.rnum { font: 22px "Liberation Sans", sans-serif; fill: #6b6b6b; }
.canvas-row { flex: 1; display: flex; min-height: 0; }
.vruler { background: #fff; overflow: visible; }
.canvas { position: relative; flex: 1; background: #ebebf1; min-width: 0; overflow: hidden; }
.plan { display: block; }
.dim { font: 18px "Liberation Sans", sans-serif; fill: #333; }
.ai-bubble {
  position: absolute;
  left: 1909px;
  top: 37px;
  width: 70px;
  height: 70px;
  border: 7px solid #cfdff3;
  border-radius: 50%;
  background: #fff;
  display: flex;
  align-items: center;
  justify-content: center;
}
.float {
  position: absolute;
  left: 727px;
  top: 614px;
  width: 630px;
  height: 159px;
  box-sizing: border-box;
  background: #fff;
  border-radius: 18px;
  border: 1px solid #f0f0f0;
  box-shadow: 0 6px 20px rgba(0, 0, 0, 0.08);
  display: flex;
  padding-top: 16px;
  font-size: 24px;
}
.fitem {
  display: flex;
  flex-direction: column;
  align-items: center;
  padding-top: 12px;
  gap: 17px;
  height: 128px;
  box-sizing: border-box;
  white-space: nowrap;
  color: #222;
}
.fitem span { line-height: 32px; }
.f-text { width: 98px; border-right: 2px solid #efefef; }
.f-copy { width: 130px; border-right: 2px solid #efefef; }
.f-style { width: 93px; padding-left: 12px; }
.f-fill { width: 82px; }
.f-line { width: 91px; padding-right: 8px; border-right: 2px solid #efefef; }
.f-set { width: 104px; }
.pin { position: absolute; right: 12px; top: 12px; }
.shrink { position: absolute; right: 13px; top: 126px; }
.vbar { flex: 1; position: relative; background: #fff; border-right: 2px solid #ebebf1; }
.vbar i { position: absolute; left: 4px; top: 201px; width: 20px; height: 730px; border-radius: 10px; background: #d2d3d5; }
.hbar { height: 28px; flex: none; position: relative; border-bottom: 2px solid #eeeeee; }
.hbar i { position: absolute; left: 280px; top: 4px; width: 1491px; height: 20px; border-radius: 10px; background: #d2d3d5; }
.hbar b { position: absolute; left: 2076px; top: -2px; width: 28px; height: 28px; background: #ebebf1; border: 1px solid #c8c8cc; }
.colors {
  flex: 1;
  display: flex;
  align-items: center;
  gap: 4.370px;
  padding-left: 70px;
  position: relative;
}
.fillico { position: absolute; left: 20px; top: 1px; }
.sw { display: block; width: 18px; height: 28px; border-radius: 5px; flex: none; }
.right { flex: none; width: 62px; box-sizing: border-box; padding-left: 10px; display: flex; flex-direction: column; align-items: center; position: relative; }
.r-fold { margin-top: 19px; }
.r-on {
  align-self: flex-start;
  margin: 20px 0 0 -10px;
  width: 62px;
  height: 70px;
  padding-left: 10px;
  box-sizing: border-box;
  background: #3a80ff;
  display: flex;
  align-items: center;
  justify-content: center;
}
.r-ico { margin-top: 36px; }
.r-ico + .r-ico { margin-top: 56px; }
.r-ico + .r-ico + .r-ico { margin-top: 53px; }
.r-gear { position: absolute; left: 20px; top: 1161px; }

/* status bar */
.status {
  flex: none;
  height: 62px;
  display: flex;
  align-items: center;
  background: linear-gradient(#f0f0f5, #dcdde1);
  font-size: 25px;
  color: #222;
  white-space: nowrap;
}
.st-panel { margin-left: 35px; }
.st-sep { display: block; width: 2px; height: 44px; background: #d2d3d7; flex: none; }
.s1 { margin-left: 23px; }
.page-name { margin-left: 36px; font-size: 26px; width: 190px; letter-spacing: 1px; flex: none; }
.st-c1 { margin: 0 26px 0 -8px; border-top-color: #777; }
.st-plus { margin: 0 27px 0 29px; }
.page-tab { margin-left: 22px; color: #3a80ff; width: 102px; font-size: 26px; font-weight: 500; flex: none; }
.s4 { margin-left: 20px; }
.st-a { padding-left: 808px; width: 129px; flex: none; }
.s5 { margin-left: 18px; }
.st-b { margin-left: 16px; width: 131px; flex: none; }
.s5b { margin-left: 19px; }
.st-layer { margin-left: 22px; }
.st-c2 { margin-left: 8px; }
.st-focus { margin-left: 32px; }
.st-c { margin-left: 20px; width: 46px; flex: none; }
.st-play { margin-left: 27px; }
.s6 { margin-left: 25px; }
.st-minus { display: block; margin-left: 21px; width: 20px; height: 3px; background: #333; flex: none; }
.slider { position: relative; margin-left: 22px; width: 192px; height: 8px; border-radius: 4px; background: #f0f0f0; flex: none; }
.slider .fill { position: absolute; left: 0; top: 0; width: 36px; height: 8px; border-radius: 4px 0 0 4px; background: #444; }
.slider .knob { position: absolute; left: 26px; top: -7px; width: 20px; height: 22px; box-sizing: border-box; border: 4px solid #444; border-radius: 50%; background: #fff; }
.st-plus2 { margin-left: 23px; }
.st-pct { margin-left: 43px; width: 52px; flex: none; }
.st-c3 { margin-left: 23px; }
.s7 { margin-left: 23px; }
.st-fit { margin-left: 27px; }
.st-exit { margin-left: 37px; }
.rest-tip {
  position: absolute;
  left: 2556px;
  top: 1452px;
  width: 60px;
  height: 53px;
  box-sizing: border-box;
  background: #5e5e62;
  border-radius: 8px;
  box-shadow: 0 2px 0 #111;
  color: #fff;
  display: flex;
  align-items: center;
  justify-content: center;
  padding-left: 12px;
  font-size: 28px;
}
.rest-tip span { transform: rotate(90deg); }
.mark { position: absolute; left: 0; top: 0; pointer-events: none; }
</style>
